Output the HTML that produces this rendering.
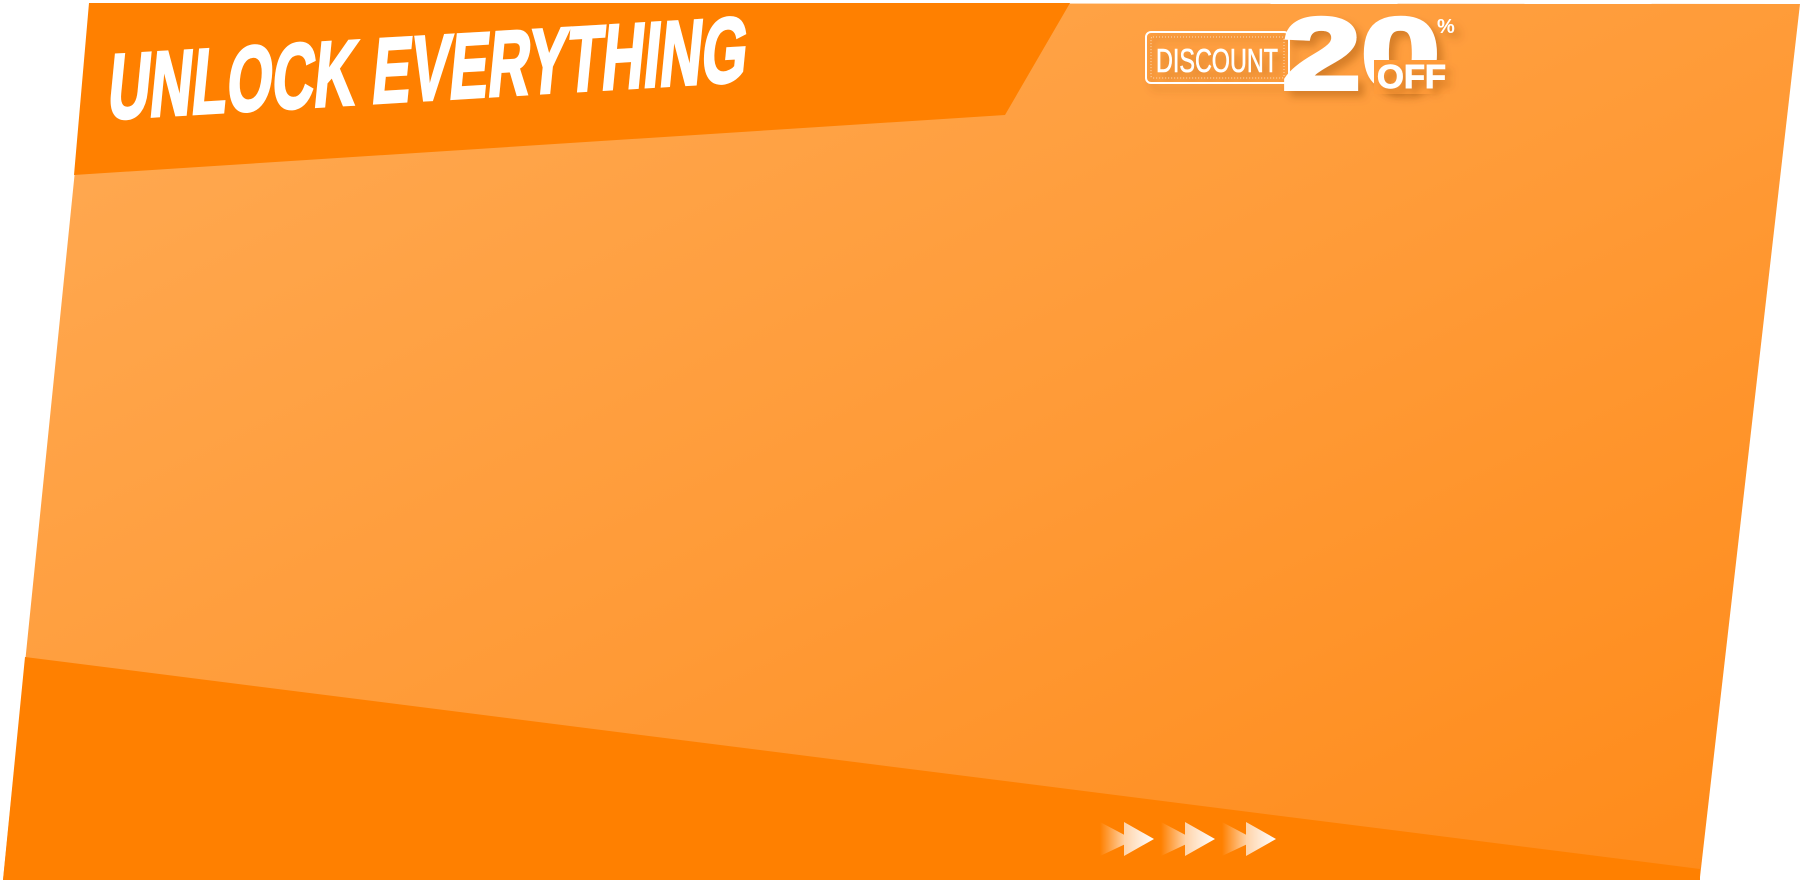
<!DOCTYPE html>
<html><head><meta charset="utf-8"><style>
html,body{margin:0;padding:0;background:#fff;width:1804px;height:882px;overflow:hidden}
svg{display:block}
</style></head><body>
<svg width="1804" height="882" viewBox="0 0 1804 882" xmlns="http://www.w3.org/2000/svg">
<defs>
<linearGradient id="bg" x1="0" y1="0" x2="1" y2="1" gradientUnits="objectBoundingBox">
<stop offset="0" stop-color="#ffab55"/>
<stop offset="0.55" stop-color="#ff9a36"/>
<stop offset="1" stop-color="#ff8a18"/>
</linearGradient>
<linearGradient id="ar" x1="0" y1="0" x2="1" y2="0">
<stop offset="0" stop-color="#fff" stop-opacity="0"/>
<stop offset="1" stop-color="#fff" stop-opacity="0.9"/>
</linearGradient>
<linearGradient id="ar2" x1="0" y1="0" x2="1" y2="0">
<stop offset="0" stop-color="#ffd3a8"/>
<stop offset="1" stop-color="#fff"/>
</linearGradient>
<filter id="sh" x="-20%" y="-20%" width="150%" height="150%"><feDropShadow dx="6" dy="6" stdDeviation="4" flood-color="#8a4000" flood-opacity="0.35"/></filter>
</defs>
<polygon points="92,3 1800,4 1700,877 3,880" fill="url(#bg)"/>
<polygon points="89,3 1070,3 1005,115 74,175" fill="#ff8000"/>
<polygon points="25,657 1700,869 1700,880 3,880" fill="#ff8000"/>
<text x="0" y="0" transform="translate(106,119) rotate(-3.4) skewX(-9)" font-family="Liberation Sans, sans-serif" font-weight="bold" font-size="92" fill="#fff" stroke="#fff" stroke-width="3" textLength="640" lengthAdjust="spacingAndGlyphs">UNLOCK EVERYTHING</text>
<g filter="url(#sh)">
<rect x="1146" y="32" width="143" height="51" rx="5" fill="none" stroke="#fff" stroke-width="2"/>
<rect x="1151" y="37" width="133" height="41" rx="2" fill="none" stroke="#fff" stroke-opacity="0.6" stroke-width="1" stroke-dasharray="1,2"/>
<text x="1217" y="72" text-anchor="middle" font-family="Liberation Sans Narrow, Liberation Sans, sans-serif" font-size="33" fill="#fff" stroke="#fff" stroke-width="0.6" textLength="122" lengthAdjust="spacingAndGlyphs">DISCOUNT</text>
<text x="1282" y="89" font-family="Liberation Sans, sans-serif" font-weight="bold" font-size="102" fill="#fff" stroke="#fff" stroke-width="4" textLength="158" lengthAdjust="spacingAndGlyphs">20</text>
<text x="1437" y="33" font-family="Liberation Sans, sans-serif" font-weight="bold" font-size="20" fill="#fff">%</text>
</g>
<rect x="1374" y="60" width="76" height="34" fill="#ff9b39"/>
<text x="1377" y="88" filter="url(#sh)" font-family="Liberation Sans, sans-serif" font-weight="bold" font-size="33" fill="#fff" stroke="#fff" stroke-width="1" textLength="69" lengthAdjust="spacingAndGlyphs">OFF</text>
<g>
<polygon points="1100,822 1134,840 1100,856" fill="url(#ar)"/>
<polygon points="1124,822 1154,839 1124,856" fill="url(#ar2)"/>
<polygon points="1161,822 1195,840 1161,856" fill="url(#ar)"/>
<polygon points="1185,822 1215,839 1185,856" fill="url(#ar2)"/>
<polygon points="1222,822 1256,840 1222,856" fill="url(#ar)"/>
<polygon points="1246,822 1276,839 1246,856" fill="url(#ar2)"/>
</g>
</svg>
</body></html>
